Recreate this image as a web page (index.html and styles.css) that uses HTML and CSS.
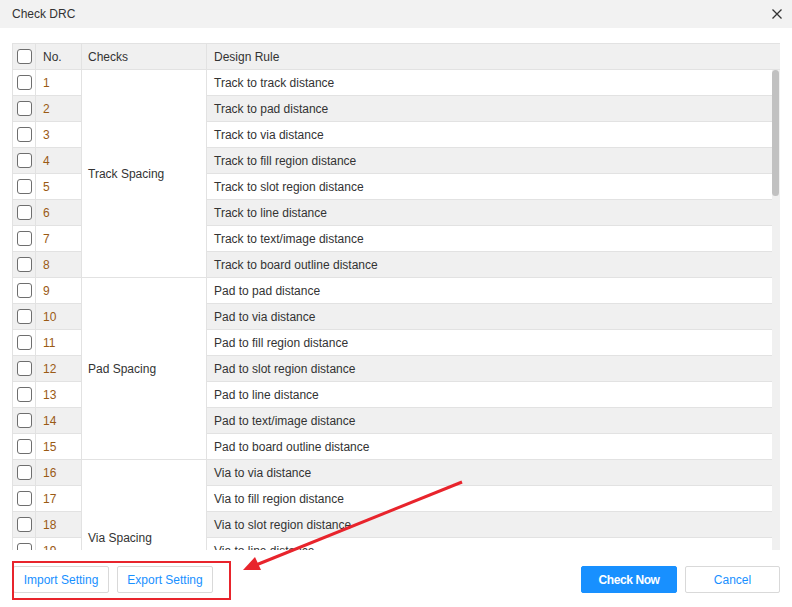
FILE: index.html
```html
<!DOCTYPE html>
<html>
<head>
<meta charset="utf-8">
<link rel="stylesheet" href="styles.css">
</head>
<body>
<div class="dialog">
  <div class="titlebar">
    <span class="title">Check DRC</span>
    <svg class="close" width="10" height="10" viewBox="0 0 10 10"><path d="M0.5 0.5L9.5 9.5M9.5 0.5L0.5 9.5" stroke="#333" stroke-width="1.3" fill="none"/></svg>
  </div>
  <div class="content">
    <div class="grid head">
      <div class="cell cb"><span class="box"></span></div>
      <div class="cell no">No.</div>
      <div class="cell grpc">Checks</div>
      <div class="cell rule">Design Rule</div>
    </div>
    <div class="scroller">
      <div class="grid body">
        <div class="cell cb"><span class="box"></span></div><div class="cell no">1</div><div class="cell grp span8">Track Spacing</div><div class="cell rule">Track to track distance</div>
        <div class="cell cb alt"><span class="box"></span></div><div class="cell no alt">2</div><div class="cell rule alt">Track to pad distance</div>
        <div class="cell cb"><span class="box"></span></div><div class="cell no">3</div><div class="cell rule">Track to via distance</div>
        <div class="cell cb alt"><span class="box"></span></div><div class="cell no alt">4</div><div class="cell rule alt">Track to fill region distance</div>
        <div class="cell cb"><span class="box"></span></div><div class="cell no">5</div><div class="cell rule">Track to slot region distance</div>
        <div class="cell cb alt"><span class="box"></span></div><div class="cell no alt">6</div><div class="cell rule alt">Track to line distance</div>
        <div class="cell cb"><span class="box"></span></div><div class="cell no">7</div><div class="cell rule">Track to text/image distance</div>
        <div class="cell cb alt"><span class="box"></span></div><div class="cell no alt">8</div><div class="cell rule alt">Track to board outline distance</div>
        <div class="cell cb"><span class="box"></span></div><div class="cell no">9</div><div class="cell grp span7">Pad Spacing</div><div class="cell rule">Pad to pad distance</div>
        <div class="cell cb alt"><span class="box"></span></div><div class="cell no alt">10</div><div class="cell rule alt">Pad to via distance</div>
        <div class="cell cb"><span class="box"></span></div><div class="cell no">11</div><div class="cell rule">Pad to fill region distance</div>
        <div class="cell cb alt"><span class="box"></span></div><div class="cell no alt">12</div><div class="cell rule alt">Pad to slot region distance</div>
        <div class="cell cb"><span class="box"></span></div><div class="cell no">13</div><div class="cell rule">Pad to line distance</div>
        <div class="cell cb alt"><span class="box"></span></div><div class="cell no alt">14</div><div class="cell rule alt">Pad to text/image distance</div>
        <div class="cell cb"><span class="box"></span></div><div class="cell no">15</div><div class="cell rule">Pad to board outline distance</div>
        <div class="cell cb alt"><span class="box"></span></div><div class="cell no alt">16</div><div class="cell grp span6">Via Spacing</div><div class="cell rule alt">Via to via distance</div>
        <div class="cell cb"><span class="box"></span></div><div class="cell no">17</div><div class="cell rule">Via to fill region distance</div>
        <div class="cell cb alt"><span class="box"></span></div><div class="cell no alt">18</div><div class="cell rule alt">Via to slot region distance</div>
        <div class="cell cb"><span class="box"></span></div><div class="cell no">19</div><div class="cell rule">Via to line distance</div>
        <div class="cell cb alt"><span class="box"></span></div><div class="cell no alt">20</div><div class="cell rule alt">Via to text/image distance</div>
        <div class="cell cb"><span class="box"></span></div><div class="cell no">21</div><div class="cell rule">Via to board outline distance</div>
      </div>
      <div class="track"><div class="thumb"></div></div>
    </div>
    <div class="footer">
      <div class="left">
        <button class="btn">Import Setting</button>
        <button class="btn">Export Setting</button>
      </div>
      <div class="right">
        <button class="btn primary">Check Now</button>
        <button class="btn">Cancel</button>
      </div>
    </div>
  </div>
  <div class="redbox"></div>
  <svg class="arrow" width="792" height="607" viewBox="0 0 792 607">
    <line x1="462" y1="482" x2="256" y2="565" stroke="#e8242c" stroke-width="3"/>
    <polygon points="243,570 255,557 261,570" fill="#e8242c"/>
  </svg>
</div>
</body>
</html>
```
FILE: styles.css
```css
* { box-sizing: border-box; }
html, body { margin: 0; padding: 0; background: #fff; }
body {
  font-family: "Liberation Sans", Arial, sans-serif;
  font-size: 12px;
  color: #333;
}
.dialog { width: 792px; height: 607px; position: relative; overflow: hidden; }
.titlebar {
  height: 28px;
  background: #f2f2f2;
  display: flex;
  align-items: center;
  justify-content: space-between;
  padding: 0 10px 0 12px;
}
.title { font-size: 12px; color: #333; }
.close { display: block; }
.content { padding: 15px 12px 0 12px; }
.grid {
  display: grid;
  grid-template-columns: 24px 46px 125px 1fr;
  grid-auto-rows: 26px;
}
.head { width: 768px; background: #f0f0f0; border-top: 1px solid #e2e2e2; }
.head .cell { height: 26px; }
.scroller { display: flex; height: 480px; overflow: hidden; }
.body { width: 760px; align-content: start; }
.cell {
  border-right: 1px solid #e2e2e2;
  border-bottom: 1px solid #e2e2e2;
  padding: 0 7px;
  display: flex;
  align-items: center;
  white-space: nowrap;
  background: #fff;
}
.head .cell { background: #f0f0f0; }
.cb { grid-column: 1; justify-content: center; padding: 0; border-left: 1px solid #e2e2e2; }
.no { grid-column: 2; color: #9a5a14; }
.head .no { color: #333; }
.grp, .grpc { grid-column: 3; padding: 0 6px; }
.rule { grid-column: 4; border-right: none; }
.span8 { grid-row: span 8; }
.span7 { grid-row: span 7; }
.span6 { grid-row: span 6; }
.alt { background: #f0f0f0; }
.box {
  width: 15px; height: 15px;
  border: 1px solid #6e6e6e;
  border-radius: 3px;
  background: #fff;
  display: block;
}
.track { width: 8px; background: #f0f0f0; }
.thumb { width: 7px; height: 126px; background: #c1c1c1; border-radius: 4px; }
.footer {
  display: flex;
  justify-content: space-between;
  padding-top: 16px;
}
.left, .right { display: flex; gap: 8px; }
.left { padding-left: 1px; }
.btn {
  font-family: "Liberation Sans", Arial, sans-serif;
  font-size: 12px;
  height: 27px;
  width: 96px;
  border: 1px solid #d9d9d9;
  background: #fff;
  color: #1890ff;
  border-radius: 2px;
  padding: 0;
}
.right .btn:last-child { width: 95px; }
.primary {
  background: #1890ff;
  border-color: #1890ff;
  color: #fff;
  font-weight: bold;
  letter-spacing: -0.4px;
}
.redbox {
  position: absolute;
  left: 12px; top: 561px;
  width: 219px; height: 39px;
  border: 2px solid #e8242c;
}
.arrow { position: absolute; left: 0; top: 0; pointer-events: none; }
```
